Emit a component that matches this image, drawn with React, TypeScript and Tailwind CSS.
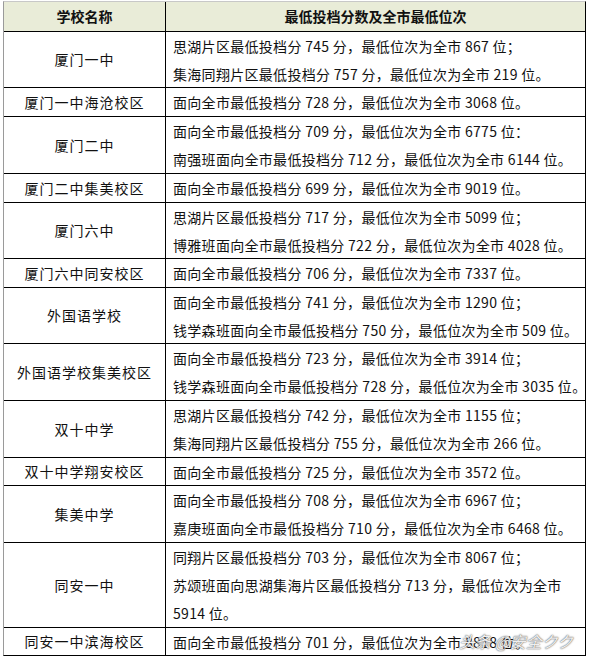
const rows: { name: string; lines: string[]; h: string }[] = [
  { name: "厦门一中", h: "h-[56px]", lines: ["思湖片区最低投档分 745 分，最低位次为全市 867 位；", "集海同翔片区最低投档分 757 分，最低位次为全市 219 位。"] },
  { name: "厦门一中海沧校区", h: "h-[29px]", lines: ["面向全市最低投档分 728 分，最低位次为全市 3068 位。"] },
  { name: "厦门二中", h: "h-[57px]", lines: ["面向全市最低投档分 709 分，最低位次为全市 6775 位：", "南强班面向全市最低投档分 712 分，最低位次为全市 6144 位。"] },
  { name: "厦门二中集美校区", h: "h-[29px]", lines: ["面向全市最低投档分 699 分，最低位次为全市 9019 位。"] },
  { name: "厦门六中", h: "h-[56px]", lines: ["思湖片区最低投档分 717 分，最低位次为全市 5099 位；", "博雅班面向全市最低投档分 722 分，最低位次为全市 4028 位。"] },
  { name: "厦门六中同安校区", h: "h-[29px]", lines: ["面向全市最低投档分 706 分，最低位次为全市 7337 位。"] },
  { name: "外国语学校", h: "h-[56px]", lines: ["面向全市最低投档分 741 分，最低位次为全市 1290 位；", "钱学森班面向全市最低投档分 750 分，最低位次为全市 509 位。"] },
  { name: "外国语学校集美校区", h: "h-[57px]", lines: ["面向全市最低投档分 723 分，最低位次为全市 3914 位；", "钱学森班面向全市最低投档分 728 分，最低位次为全市 3035 位。"] },
  { name: "双十中学", h: "h-[57px]", lines: ["思湖片区最低投档分 742 分，最低位次为全市 1155 位；", "集海同翔片区最低投档分 755 分，最低位次为全市 266 位。"] },
  { name: "双十中学翔安校区", h: "h-[28px]", lines: ["面向全市最低投档分 725 分，最低位次为全市 3572 位。"] },
  { name: "集美中学", h: "h-[57px]", lines: ["面向全市最低投档分 708 分，最低位次为全市 6967 位；", "嘉庚班面向全市最低投档分 710 分，最低位次为全市 6468 位。"] },
  { name: "同安一中", h: "h-[85px]", lines: ["同翔片区最低投档分 703 分，最低位次为全市 8067 位；", "苏颂班面向思湖集海片区最低投档分 713 分，最低位次为全市", "5914 位。"] },
  { name: "同安一中滨海校区", h: "h-[27px]", lines: ["面向全市最低投档分 701 分，最低位次为全市 8818 位。"] },
];

export default function App() {
  return (
    <div className="w-[589px] h-[658px] bg-white pt-[1px] pl-[3px] font-['Noto_Sans_CJK_SC',sans-serif] text-[14px] text-[#111]">
      <div className="relative w-[583px] border border-black border-t-[#c8c8c8] border-l-[#9a9a9a]">
        {/* header */}
        <div className="flex h-[30px] bg-[#e9ecd8] border-b border-black font-bold">
          <div className="w-[162px] shrink-0 border-r border-black flex items-center justify-center">学校名称</div>
          <div className="flex-1 flex items-center justify-center">最低投档分数及全市最低位次</div>
        </div>

        {rows.map((r, i) => (
          <div
            key={r.name}
            className={`flex ${r.h} ${i < rows.length - 1 ? "border-b border-black" : ""}`}
          >
            <div className="w-[162px] shrink-0 border-r border-black flex items-center justify-center tracking-[1px]">
              {r.name}
            </div>
            <div className="flex-1 flex flex-col justify-center pl-[7px]">
              {r.lines.map((l) => (
                <div key={l} className="leading-[28px] whitespace-nowrap tracking-[0.3px]">
                  {l}
                </div>
              ))}
            </div>
          </div>
        ))}

        {/* watermark */}
        <div className="absolute right-[12px] bottom-[2px] text-[16px] italic text-white/90 [text-shadow:0_0_1px_#555,0_0_2px_#777]">
          头条 @安全クク
        </div>
      </div>
    </div>
  );
}
